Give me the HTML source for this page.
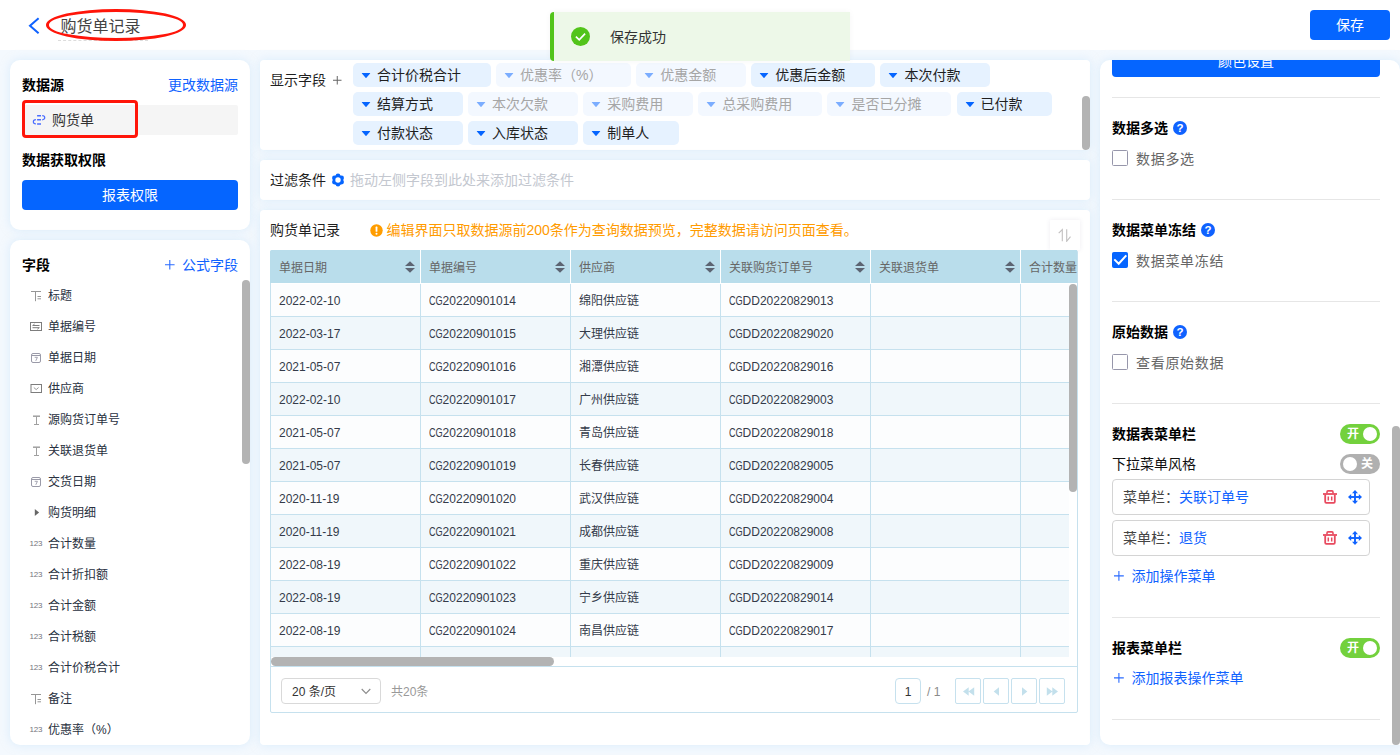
<!DOCTYPE html>
<html lang="zh-CN">
<head>
<meta charset="utf-8">
<title>购货单记录</title>
<style>
*{box-sizing:border-box;margin:0;padding:0}
html,body{width:1400px;height:755px;overflow:hidden}
body{font-family:"Liberation Sans","Noto Sans CJK SC",sans-serif;font-size:14px;color:#1f1f1f;background:#f4f9fe;position:relative}
.abs{position:absolute}
.hdr{position:absolute;left:0;top:0;width:1400px;height:50px;background:#fff}
.card{position:absolute;background:#fff;border-radius:10px;box-shadow:0 0 10px rgba(192,224,250,.5)}
.t{position:absolute;white-space:nowrap;line-height:20px;height:20px}
.b{font-weight:bold;color:#000}
.blue{color:#0f62ff}
.btn{position:absolute;background:#0565ff;color:#fff;border-radius:4px;text-align:center;font-size:14px}
.fld{position:absolute;left:48px;font-size:12px;line-height:20px;height:20px;white-space:nowrap;color:#283040}
.ico{position:absolute;overflow:visible}
.tag{position:absolute;height:24px;border-radius:5px;background:#e6f2ff;font-size:14px;line-height:25px;padding-left:24px;white-space:nowrap;color:#1f1f1f}
.tag svg{position:absolute;left:8px;top:9px}
.tag.dim{background:#f3f8ff;color:#a6a6a6}
.tag.dim svg{opacity:.5}
.sb{position:absolute;background:#b3b3b3;border-radius:4px}

.sortbtn{position:absolute;left:790px;top:10px;width:30px;height:30px;background:#fff;box-shadow:0 0 5px rgba(60,40,100,.09);border-radius:1px}
.sortbtn svg{position:absolute;left:8px;top:8px}
.tbl{position:absolute;left:10px;top:40px;width:808px;height:463px;border:1px solid #c6e1ee;border-radius:2px}
.thead{position:absolute;left:-1px;top:-1px;width:807px;height:33px;background:#b9ddeb;border-radius:2px 0 0 0;overflow:hidden}
.th{position:absolute;top:0;width:150px;height:33px;line-height:37px;padding-left:8px;margin-left:1px;font-size:12px;color:#666;border-right:1px solid #fff;white-space:nowrap}
.th .sort{position:absolute;right:5px;top:10.700px}
.tbody{position:absolute;left:0;top:33px;width:798px;height:373px;overflow:hidden;background:#fff}
.tr{position:absolute;left:0;width:900px;height:33px;background:#fcfdfe;border-bottom:1px solid #c6e1ee}
.tr.alt{background:#f0f7fb}
.td{position:absolute;top:0;left:0;width:150px;height:32px;line-height:35px;padding-left:8px;font-size:12px;color:#343b4a;border-right:1px solid #c6e1ee;white-space:nowrap}
.psel{position:absolute;left:10px;top:427px;width:100px;height:26px;border:1px solid #d9d9d9;border-radius:4px;font-size:12px;line-height:26px;padding-left:10px;color:#333}
.psel svg{position:absolute;left:79px;top:9px}
.pinp{position:absolute;left:624px;top:427px;width:26px;height:26px;border:1px solid #c6e1ee;border-radius:4px;font-size:12px;line-height:26px;text-align:center;color:#333}
.pbtn{position:absolute;top:427px;width:26px;height:26px;border:1px solid #c6e1ee;border-radius:2px}
.pbtn svg{position:absolute;left:5.500px;top:6.500px}

.hr{position:absolute;left:12px;width:268px;height:1px;background:#e6e6e6}
.cb{position:absolute;left:12px;width:16px;height:16px;border:1px solid #9797ab;border-radius:1.500px;background:#fff}
.cb.on{background:#0565ff;border-color:#0565ff}
.cb.on svg{position:absolute;left:-1px;top:-1px}
.cl{left:36px;color:#666;letter-spacing:.7px}
.sw{position:absolute;left:240px;width:40px;height:20px;border-radius:10px;color:#fff;font-size:12px;font-weight:bold;line-height:20px}
.sw.on{background:#73d13d}
.sw.off{background:#b0b0b0}
.sw i{position:absolute;top:3px;width:14px;height:14px;border-radius:7px;background:#fff}
.sw.on i{right:3px}.sw.off i{left:3px}
.sw span{position:absolute;top:0;line-height:21px}
.sw.on span{left:7px}.sw.off span{right:7px}
.mi{position:absolute;left:12px;width:258px;height:36px;border:1px solid #d4d4d4;border-radius:4px;line-height:34px;padding-left:10px;font-size:14px;white-space:nowrap}
.mi .k{color:#444}
.cg{display:inline-block;transform:scaleX(.76);transform-origin:0 50%;margin-right:-4.400px}
</style>
</head>
<body>
<!-- header -->
<div class="hdr">
  <svg class="ico" style="left:28px;top:17px" width="12" height="18" viewBox="0 0 12 18"><path d="M10.600 1.200 L2 8.700 L10.600 16.200" fill="none" stroke="#0f62ff" stroke-width="2" stroke-linecap="butt" stroke-linejoin="miter"/></svg>
  <div class="t" style="left:60.500px;top:15px;font-size:16px;line-height:24px;height:24px;color:#444">购货单记录</div>
  <div class="abs" style="left:58px;top:40px;width:90px;border-top:1px dashed #dcdcdc"></div>
  <div class="abs" style="left:46px;top:9px;width:140px;height:31.500px;border:3px solid #ff1509;border-radius:50%"></div>
  <div class="btn" style="left:1310px;top:10px;width:80px;height:30px;line-height:30px">保存</div>
</div>

<!-- LEFT-1 -->
<div class="card" style="left:10px;top:60px;width:240px;height:170px">
  <div class="t b" style="left:12px;top:15px">数据源</div>
  <div class="t blue" style="right:12px;top:15px">更改数据源</div>
  <div class="abs" style="left:12px;top:45px;width:216px;height:30px;background:#f5f5f5;border-radius:2px"></div>
  <svg class="ico" style="left:22px;top:54px" width="14" height="12" viewBox="0 0 14 12"><g fill="none" stroke="#4a6dff" stroke-width="1.500" stroke-linecap="butt"><path d="M5.100 1.700H9M5.100 5.700H9M5.100 9.900H9"/><path d="M10.200 1.700C13.600 1.700 13.600 5.800 10.200 5.800" stroke-width="1.200"/><path d="M3.900 5.700C0.500 5.700 0.500 9.900 3.900 9.900" stroke-width="1.200"/></g></svg>
  <div class="t" style="left:42px;top:50px;color:#333">购货单</div>
  <div class="abs" style="left:12px;top:40px;width:116px;height:38px;border:3px solid #ff1509;border-radius:4px"></div>
  <div class="t b" style="left:12px;top:90px">数据获取权限</div>
  <div class="btn" style="left:12px;top:120px;width:216px;height:30px;line-height:30px">报表权限</div>
</div>

<!-- LEFT-2 -->
<div class="card" id="fields" style="left:10px;top:240px;width:240px;height:505px;overflow:hidden">
  <div class="t b" style="left:12px;top:15px">字段</div>
  <svg class="ico" style="left:155.3px;top:19.7px" width="9.6" height="9.6" viewBox="0 0 9.6 9.6"><path d="M4.8 0V9.6M0 4.8H9.6" fill="none" stroke="#2a6bff" stroke-width="1.1"/></svg><div class="t blue" style="right:12px;top:15px">公式字段</div>
  <svg class="ico" style="left:20px;top:50px" width="12" height="12" viewBox="0 0 12 12"><g fill="none" stroke="#969696" stroke-width="1"><path d="M1 1.500h10M5.500 1.500v9.700M7.500 6.500h3.500M7.500 8.800h3.500"/></g></svg>
  <div class="fld" style="left:38px;top:46px">标题</div>
  <svg class="ico" style="left:20px;top:81px" width="12" height="12" viewBox="0 0 12 12"><g fill="none" stroke="#7d7d7d" stroke-width="1"><rect x="0.500" y="1.500" width="11" height="8"/><path d="M2.500 4.500h7M2.500 6.700h7M4.600 3L2.900 4.500M7.400 8.200L9.100 6.700"/></g></svg>
  <div class="fld" style="left:38px;top:77px">单据编号</div>
  <svg class="ico" style="left:20px;top:112px" width="12" height="12" viewBox="0 0 12 12"><g fill="none" stroke="#9a9aa8" stroke-width="1"><rect x="1.500" y="1.500" width="9" height="9" rx="1.500"/><path d="M1.500 3.500h9"/><path d="M4.700 5.300h2.700l-1.600 3.500" stroke-width="0.900"/></g></svg>
  <div class="fld" style="left:38px;top:108px">单据日期</div>
  <svg class="ico" style="left:20px;top:143px" width="12" height="12" viewBox="0 0 12 12"><g fill="none" stroke="#7d7d7d" stroke-width="1"><rect x="1" y="1.500" width="10.500" height="8"/><path d="M3.800 4.500L6.200 6.600L8.600 4.500" stroke="#9a9a9a"/></g></svg>
  <div class="fld" style="left:38px;top:139px">供应商</div>
  <svg class="ico" style="left:20px;top:174px" width="12" height="12" viewBox="0 0 12 12"><g fill="none" stroke="#a0a0a0"><path d="M3 2.200h7" stroke-width="1.500"/><path d="M6.500 2v8.300" stroke-width="1"/><path d="M4 10.500h5" stroke-width="1"/></g></svg>
  <div class="fld" style="left:38px;top:170px">源购货订单号</div>
  <svg class="ico" style="left:20px;top:205px" width="12" height="12" viewBox="0 0 12 12"><g fill="none" stroke="#a0a0a0"><path d="M3 2.200h7" stroke-width="1.500"/><path d="M6.500 2v8.300" stroke-width="1"/><path d="M4 10.500h5" stroke-width="1"/></g></svg>
  <div class="fld" style="left:38px;top:201px">关联退货单</div>
  <svg class="ico" style="left:20px;top:236px" width="12" height="12" viewBox="0 0 12 12"><g fill="none" stroke="#9a9aa8" stroke-width="1"><rect x="1.500" y="1.500" width="9" height="9" rx="1.500"/><path d="M1.500 3.500h9"/><path d="M4.700 5.300h2.700l-1.600 3.500" stroke-width="0.900"/></g></svg>
  <div class="fld" style="left:38px;top:232px">交货日期</div>
  <svg class="ico" style="left:20px;top:267px" width="12" height="12" viewBox="0 0 12 12"><path d="M4.800 1.900L9.100 5.500L4.800 9z" fill="#666"/></svg>
  <div class="fld" style="left:38px;top:263px">购货明细</div>
  <span class="abs" style="left:19.500px;top:297.5px;font-size:8px;line-height:12px;color:#74747c;letter-spacing:-.2px">123</span>
  <div class="fld" style="left:38px;top:294px">合计数量</div>
  <span class="abs" style="left:19.500px;top:328.5px;font-size:8px;line-height:12px;color:#74747c;letter-spacing:-.2px">123</span>
  <div class="fld" style="left:38px;top:325px">合计折扣额</div>
  <span class="abs" style="left:19.500px;top:359.5px;font-size:8px;line-height:12px;color:#74747c;letter-spacing:-.2px">123</span>
  <div class="fld" style="left:38px;top:356px">合计金额</div>
  <span class="abs" style="left:19.500px;top:390.5px;font-size:8px;line-height:12px;color:#74747c;letter-spacing:-.2px">123</span>
  <div class="fld" style="left:38px;top:387px">合计税额</div>
  <span class="abs" style="left:19.500px;top:421.5px;font-size:8px;line-height:12px;color:#74747c;letter-spacing:-.2px">123</span>
  <div class="fld" style="left:38px;top:418px">合计价税合计</div>
  <svg class="ico" style="left:20px;top:453px" width="12" height="12" viewBox="0 0 12 12"><g fill="none" stroke="#969696" stroke-width="1"><path d="M1 1.500h10M5.500 1.500v9.700M7.500 6.500h3.500M7.500 8.800h3.500"/></g></svg>
  <div class="fld" style="left:38px;top:449px">备注</div>
  <span class="abs" style="left:19.500px;top:483.5px;font-size:8px;line-height:12px;color:#74747c;letter-spacing:-.2px">123</span>
  <div class="fld" style="left:38px;top:480px">优惠率（%）</div>
  <div class="sb" style="left:232px;top:40px;width:8px;height:184px"></div>
</div>

<!-- MID-1 display fields -->
<div class="card" style="left:260px;top:60px;width:830px;height:90px;overflow:hidden;border-radius:4px" id="m1">
  <div class="t" style="left:10px;top:10px">显示字段</div>
  <svg class="ico" style="left:72.65px;top:16.25px" width="8.5" height="8.5" viewBox="0 0 8.5 8.5"><path d="M4.25 0V8.5M0 4.25H8.5" fill="none" stroke="#666" stroke-width="1"/></svg>
  <div class="tag" style="left:93px;top:3px;width:137.5px"><svg width="10" height="7" viewBox="0 0 10 7"><path d="M1.200 0.900h7.600a.4.400 0 0 1 .3.700L5.400 5.700a.5.500 0 0 1-.8 0L0.900 1.600a.4.400 0 0 1 .3-.7z" fill="#0565ff"/></svg>合计价税合计</div>
  <div class="tag dim" style="left:236.1px;top:3px;width:134.5px"><svg width="10" height="7" viewBox="0 0 10 7"><path d="M1.200 0.900h7.600a.4.400 0 0 1 .3.700L5.400 5.700a.5.500 0 0 1-.8 0L0.900 1.600a.4.400 0 0 1 .3-.7z" fill="#0565ff"/></svg>优惠率（%）</div>
  <div class="tag dim" style="left:376.2px;top:3px;width:109.5px"><svg width="10" height="7" viewBox="0 0 10 7"><path d="M1.200 0.900h7.600a.4.400 0 0 1 .3.700L5.400 5.700a.5.500 0 0 1-.8 0L0.900 1.600a.4.400 0 0 1 .3-.7z" fill="#0565ff"/></svg>优惠金额</div>
  <div class="tag" style="left:491.3px;top:3px;width:123.5px"><svg width="10" height="7" viewBox="0 0 10 7"><path d="M1.200 0.900h7.600a.4.400 0 0 1 .3.700L5.400 5.700a.5.500 0 0 1-.8 0L0.900 1.600a.4.400 0 0 1 .3-.7z" fill="#0565ff"/></svg>优惠后金额</div>
  <div class="tag" style="left:620.4px;top:3px;width:109.5px"><svg width="10" height="7" viewBox="0 0 10 7"><path d="M1.200 0.900h7.600a.4.400 0 0 1 .3.700L5.400 5.700a.5.500 0 0 1-.8 0L0.900 1.600a.4.400 0 0 1 .3-.7z" fill="#0565ff"/></svg>本次付款</div>
  <div class="tag" style="left:93px;top:32px;width:109.5px"><svg width="10" height="7" viewBox="0 0 10 7"><path d="M1.200 0.900h7.600a.4.400 0 0 1 .3.700L5.400 5.700a.5.500 0 0 1-.8 0L0.900 1.600a.4.400 0 0 1 .3-.7z" fill="#0565ff"/></svg>结算方式</div>
  <div class="tag dim" style="left:208.1px;top:32px;width:109.5px"><svg width="10" height="7" viewBox="0 0 10 7"><path d="M1.200 0.900h7.600a.4.400 0 0 1 .3.700L5.400 5.700a.5.500 0 0 1-.8 0L0.900 1.600a.4.400 0 0 1 .3-.7z" fill="#0565ff"/></svg>本次欠款</div>
  <div class="tag dim" style="left:323.2px;top:32px;width:109.5px"><svg width="10" height="7" viewBox="0 0 10 7"><path d="M1.200 0.900h7.600a.4.400 0 0 1 .3.700L5.400 5.700a.5.500 0 0 1-.8 0L0.900 1.600a.4.400 0 0 1 .3-.7z" fill="#0565ff"/></svg>采购费用</div>
  <div class="tag dim" style="left:438.3px;top:32px;width:123.5px"><svg width="10" height="7" viewBox="0 0 10 7"><path d="M1.200 0.900h7.600a.4.400 0 0 1 .3.700L5.400 5.700a.5.500 0 0 1-.8 0L0.900 1.600a.4.400 0 0 1 .3-.7z" fill="#0565ff"/></svg>总采购费用</div>
  <div class="tag dim" style="left:567.4px;top:32px;width:123.5px"><svg width="10" height="7" viewBox="0 0 10 7"><path d="M1.200 0.900h7.600a.4.400 0 0 1 .3.700L5.400 5.700a.5.500 0 0 1-.8 0L0.900 1.600a.4.400 0 0 1 .3-.7z" fill="#0565ff"/></svg>是否已分摊</div>
  <div class="tag" style="left:696.5px;top:32px;width:95.5px"><svg width="10" height="7" viewBox="0 0 10 7"><path d="M1.200 0.900h7.600a.4.400 0 0 1 .3.700L5.400 5.700a.5.500 0 0 1-.8 0L0.900 1.600a.4.400 0 0 1 .3-.7z" fill="#0565ff"/></svg>已付款</div>
  <div class="tag" style="left:93px;top:61px;width:109.5px"><svg width="10" height="7" viewBox="0 0 10 7"><path d="M1.200 0.900h7.600a.4.400 0 0 1 .3.700L5.400 5.700a.5.500 0 0 1-.8 0L0.900 1.600a.4.400 0 0 1 .3-.7z" fill="#0565ff"/></svg>付款状态</div>
  <div class="tag" style="left:208.1px;top:61px;width:109.5px"><svg width="10" height="7" viewBox="0 0 10 7"><path d="M1.200 0.900h7.600a.4.400 0 0 1 .3.700L5.400 5.700a.5.500 0 0 1-.8 0L0.900 1.600a.4.400 0 0 1 .3-.7z" fill="#0565ff"/></svg>入库状态</div>
  <div class="tag" style="left:323.2px;top:61px;width:95.5px"><svg width="10" height="7" viewBox="0 0 10 7"><path d="M1.200 0.900h7.600a.4.400 0 0 1 .3.700L5.400 5.700a.5.500 0 0 1-.8 0L0.900 1.600a.4.400 0 0 1 .3-.7z" fill="#0565ff"/></svg>制单人</div>
  <div class="sb" style="left:822px;top:36px;width:8px;height:54px"></div>
</div>
<!-- MID-2 filter -->
<div class="card" style="left:260px;top:160px;width:830px;height:40px;border-radius:4px">
  <div class="t" style="left:10px;top:10px">过滤条件</div>
  <svg class="ico" style="left:70.500px;top:13px" width="14" height="14" viewBox="0 0 14 14"><g fill="#0565ff"><circle cx="7" cy="7" r="5.200"/><circle cx="10.64" cy="9.10" r="2.300"/><circle cx="7.00" cy="11.20" r="2.300"/><circle cx="3.36" cy="9.10" r="2.300"/><circle cx="3.36" cy="4.90" r="2.300"/><circle cx="7.00" cy="2.80" r="2.300"/><circle cx="10.64" cy="4.90" r="2.300"/></g><circle cx="7" cy="7" r="2.700" fill="#fff"/></svg>
  <div class="t" style="left:90px;top:10px;color:#c3c7cf">拖动左侧字段到此处来添加过滤条件</div>
</div>
<!-- MID-3 table -->
<div class="card" style="left:260px;top:210px;width:830px;height:535px;border-radius:4px" id="m3">
  <div class="t" style="left:10px;top:10px">购货单记录</div>
  <svg class="ico" style="left:110px;top:14px" width="13" height="13" viewBox="0 0 13 13"><circle cx="6.500" cy="6.500" r="6.200" fill="#ff9d00"/><rect x="5.600" y="2.600" width="1.800" height="5.200" rx=".6" fill="#fff"/><circle cx="6.500" cy="9.800" r="1" fill="#fff"/></svg>
  <div class="t" style="left:126.500px;top:10px;color:#ff9b00">编辑界面只取数据源前200条作为查询数据预览，完整数据请访问页面查看。</div>
  <div class="sortbtn"><svg width="14" height="14" viewBox="0 0 14 14"><g fill="none" stroke="#c2c0c0" stroke-width="1.100"><path d="M0.700 5.100L4.300 1.500V13.300"/><path d="M8.700 1.300V13.300L12.500 8.700"/></g></svg></div>
  <div class="tbl">
    <div class="thead">
      <div class="th" style="left:0px">单据日期<svg class="sort" width="10" height="12" viewBox="0 0 10 12"><path d="M5 0.200L10 5H0z M5 11.800L0 7H10z" fill="#5c6472"/></svg></div>
      <div class="th" style="left:150px">单据编号<svg class="sort" width="10" height="12" viewBox="0 0 10 12"><path d="M5 0.200L10 5H0z M5 11.800L0 7H10z" fill="#5c6472"/></svg></div>
      <div class="th" style="left:300px">供应商<svg class="sort" width="10" height="12" viewBox="0 0 10 12"><path d="M5 0.200L10 5H0z M5 11.800L0 7H10z" fill="#5c6472"/></svg></div>
      <div class="th" style="left:450px">关联购货订单号<svg class="sort" width="10" height="12" viewBox="0 0 10 12"><path d="M5 0.200L10 5H0z M5 11.800L0 7H10z" fill="#5c6472"/></svg></div>
      <div class="th" style="left:600px">关联退货单<svg class="sort" width="10" height="12" viewBox="0 0 10 12"><path d="M5 0.200L10 5H0z M5 11.800L0 7H10z" fill="#5c6472"/></svg></div>
      <div class="th" style="left:750px">合计数量</div>
    </div>
    <div class="tbody">
      <div class="tr" style="top:0px"><div class="td" style="left:0px">2022-02-10</div><div class="td" style="left:150px"><span class="cg">CG</span>20220901014</div><div class="td" style="left:300px">绵阳供应链</div><div class="td" style="left:450px"><span class="cg">CG</span>DD20220829013</div><div class="td" style="left:600px"></div><div class="td" style="left:750px"></div></div>
      <div class="tr alt" style="top:33px"><div class="td" style="left:0px">2022-03-17</div><div class="td" style="left:150px"><span class="cg">CG</span>20220901015</div><div class="td" style="left:300px">大理供应链</div><div class="td" style="left:450px"><span class="cg">CG</span>DD20220829020</div><div class="td" style="left:600px"></div><div class="td" style="left:750px"></div></div>
      <div class="tr" style="top:66px"><div class="td" style="left:0px">2021-05-07</div><div class="td" style="left:150px"><span class="cg">CG</span>20220901016</div><div class="td" style="left:300px">湘潭供应链</div><div class="td" style="left:450px"><span class="cg">CG</span>DD20220829016</div><div class="td" style="left:600px"></div><div class="td" style="left:750px"></div></div>
      <div class="tr alt" style="top:99px"><div class="td" style="left:0px">2022-02-10</div><div class="td" style="left:150px"><span class="cg">CG</span>20220901017</div><div class="td" style="left:300px">广州供应链</div><div class="td" style="left:450px"><span class="cg">CG</span>DD20220829003</div><div class="td" style="left:600px"></div><div class="td" style="left:750px"></div></div>
      <div class="tr" style="top:132px"><div class="td" style="left:0px">2021-05-07</div><div class="td" style="left:150px"><span class="cg">CG</span>20220901018</div><div class="td" style="left:300px">青岛供应链</div><div class="td" style="left:450px"><span class="cg">CG</span>DD20220829018</div><div class="td" style="left:600px"></div><div class="td" style="left:750px"></div></div>
      <div class="tr alt" style="top:165px"><div class="td" style="left:0px">2021-05-07</div><div class="td" style="left:150px"><span class="cg">CG</span>20220901019</div><div class="td" style="left:300px">长春供应链</div><div class="td" style="left:450px"><span class="cg">CG</span>DD20220829005</div><div class="td" style="left:600px"></div><div class="td" style="left:750px"></div></div>
      <div class="tr" style="top:198px"><div class="td" style="left:0px">2020-11-19</div><div class="td" style="left:150px"><span class="cg">CG</span>20220901020</div><div class="td" style="left:300px">武汉供应链</div><div class="td" style="left:450px"><span class="cg">CG</span>DD20220829004</div><div class="td" style="left:600px"></div><div class="td" style="left:750px"></div></div>
      <div class="tr alt" style="top:231px"><div class="td" style="left:0px">2020-11-19</div><div class="td" style="left:150px"><span class="cg">CG</span>20220901021</div><div class="td" style="left:300px">成都供应链</div><div class="td" style="left:450px"><span class="cg">CG</span>DD20220829008</div><div class="td" style="left:600px"></div><div class="td" style="left:750px"></div></div>
      <div class="tr" style="top:264px"><div class="td" style="left:0px">2022-08-19</div><div class="td" style="left:150px"><span class="cg">CG</span>20220901022</div><div class="td" style="left:300px">重庆供应链</div><div class="td" style="left:450px"><span class="cg">CG</span>DD20220829009</div><div class="td" style="left:600px"></div><div class="td" style="left:750px"></div></div>
      <div class="tr alt" style="top:297px"><div class="td" style="left:0px">2022-08-19</div><div class="td" style="left:150px"><span class="cg">CG</span>20220901023</div><div class="td" style="left:300px">宁乡供应链</div><div class="td" style="left:450px"><span class="cg">CG</span>DD20220829014</div><div class="td" style="left:600px"></div><div class="td" style="left:750px"></div></div>
      <div class="tr" style="top:330px"><div class="td" style="left:0px">2022-08-19</div><div class="td" style="left:150px"><span class="cg">CG</span>20220901024</div><div class="td" style="left:300px">南昌供应链</div><div class="td" style="left:450px"><span class="cg">CG</span>DD20220829017</div><div class="td" style="left:600px"></div><div class="td" style="left:750px"></div></div>
      <div class="tr alt" style="top:363px"><div class="td" style="left:0px"></div><div class="td" style="left:150px"></div><div class="td" style="left:300px"></div><div class="td" style="left:450px"></div><div class="td" style="left:600px"></div><div class="td" style="left:750px"></div></div>
    </div>
    <div class="sb" style="left:798px;top:33px;width:8px;height:208px"></div>
    <div class="sb" style="left:0px;top:406px;width:283px;height:9px;border-radius:4.500px"></div>
    <div class="abs" style="left:0;top:415px;width:806px;height:1px;background:#c6e1ee"></div>
    <div class="psel"><span>20 条/页</span><svg width="10" height="7" viewBox="0 0 10 7"><path d="M0.700 1L5 5.500L9.300 1" fill="none" stroke="#8c8c8c" stroke-width="1.100"/></svg></div>
    <div class="t" style="left:120px;top:431px;font-size:12px;color:#999">共20条</div>
    <div class="pinp">1</div>
    <div class="t" style="left:656px;top:431px;font-size:12px;color:#8a8a8a">/ 1</div>
    <div class="pbtn" style="left:684px"><svg width="13" height="11" viewBox="0 0 13 11" fill="#c3e0ec"><path d="M6.700 1.300L1 5.500L6.700 9.700z M12.200 1.300L6.500 5.500L12.200 9.700z"/></svg></div>
    <div class="pbtn" style="left:712px"><svg width="13" height="11" viewBox="0 0 13 11" fill="#c3e0ec"><path d="M9 1.300L3.700 5.500L9 9.700z"/></svg></div>
    <div class="pbtn" style="left:740px"><svg width="13" height="11" viewBox="0 0 13 11" fill="#c3e0ec"><path d="M4 1.300L9.300 5.500L4 9.700z"/></svg></div>
    <div class="pbtn" style="left:768px"><svg width="13" height="11" viewBox="0 0 13 11" fill="#c3e0ec"><path d="M0.800 1.300L6.500 5.500L0.800 9.700z M6.300 1.300L12 5.500L6.300 9.700z"/></svg></div>
  </div>
</div>

<!-- RIGHT -->
<div class="card" id="rp" style="left:1100px;top:60px;width:300px;height:685px;overflow:hidden;border-radius:10px 10px 0 10px">
  <div class="btn" style="left:12px;top:-14px;width:268px;height:31px;line-height:31px">颜色设置</div>
  <div class="hr" style="top:37px"></div>
  <div class="hr" style="top:139px"></div>
  <div class="hr" style="top:241px"></div>
  <div class="hr" style="top:343px"></div>
  <div class="hr" style="top:557px"></div>
  <div class="hr" style="top:659px"></div>
  <div class="t b" style="left:12px;top:58px">数据多选</div><svg class="ico" style="left:73px;top:61px" width="14" height="14" viewBox="0 0 14 14"><circle cx="7" cy="7" r="7" fill="#0f62ff"/><text x="7" y="11.100" text-anchor="middle" font-family="Liberation Sans,sans-serif" font-size="11.500" font-weight="bold" fill="#fff">?</text></svg>
  <div class="cb" style="top:90px"></div><div class="t cl" style="top:89px">数据多选</div>
  <div class="t b" style="left:12px;top:160px">数据菜单冻结</div><svg class="ico" style="left:101px;top:163px" width="14" height="14" viewBox="0 0 14 14"><circle cx="7" cy="7" r="7" fill="#0f62ff"/><text x="7" y="11.100" text-anchor="middle" font-family="Liberation Sans,sans-serif" font-size="11.500" font-weight="bold" fill="#fff">?</text></svg>
  <div class="cb on" style="top:192px"><svg width="16" height="16" viewBox="0 0 16 16"><path d="M2.300 7.400L6.700 11.700L14.300 3.300" fill="none" stroke="#fff" stroke-width="2"/></svg></div><div class="t cl" style="top:191px">数据菜单冻结</div>
  <div class="t b" style="left:12px;top:262px">原始数据</div><svg class="ico" style="left:73px;top:265px" width="14" height="14" viewBox="0 0 14 14"><circle cx="7" cy="7" r="7" fill="#0f62ff"/><text x="7" y="11.100" text-anchor="middle" font-family="Liberation Sans,sans-serif" font-size="11.500" font-weight="bold" fill="#fff">?</text></svg>
  <div class="cb" style="top:294px"></div><div class="t cl" style="top:293px">查看原始数据</div>
  <div class="t b" style="left:12px;top:364px">数据表菜单栏</div><div class="sw on" style="top:364px"><span>开</span><i></i></div>
  <div class="t" style="left:12px;top:394px;color:#111">下拉菜单风格</div><div class="sw off" style="top:394px"><i></i><span>关</span></div>
  <div class="mi" style="top:419px"><span class="k">菜单栏：</span><span class="blue">关联订单号</span><svg class="ico" style="left:210px;top:10px" width="14" height="14" viewBox="0 0 14 14"><g fill="none" stroke="#e84a5f"><path d="M0 4h14" stroke-width="1.800"/><path d="M4 3.600V1.900a1 1 0 0 1 1-1h4a1 1 0 0 1 1 1v1.700" stroke-width="1.600"/><path d="M2.200 4.500v7.300a1.100 1.100 0 0 0 1.100 1.100h7.400a1.100 1.100 0 0 0 1.100-1.100V4.500" stroke-width="1.800"/><path d="M5.300 6.400v4.200M8.700 6.400v4.200" stroke-width="1.500"/></g></svg><svg class="ico" style="left:235.300px;top:9.600px" width="14" height="14" viewBox="0 0 14 14"><g fill="#0f62ff"><rect x="6.050" y="2" width="1.900" height="10"/><rect x="2" y="6.050" width="10" height="1.900"/><path d="M7 0L10 3.200H4z"/><path d="M7 14L4 10.800h6z"/><path d="M0 7L3.200 4v6z"/><path d="M14 7L10.800 10V4z"/></g></svg></div>
  <div class="mi" style="top:460px"><span class="k">菜单栏：</span><span class="blue">退货</span><svg class="ico" style="left:210px;top:10px" width="14" height="14" viewBox="0 0 14 14"><g fill="none" stroke="#e84a5f"><path d="M0 4h14" stroke-width="1.800"/><path d="M4 3.600V1.900a1 1 0 0 1 1-1h4a1 1 0 0 1 1 1v1.700" stroke-width="1.600"/><path d="M2.200 4.500v7.300a1.100 1.100 0 0 0 1.100 1.100h7.400a1.100 1.100 0 0 0 1.100-1.100V4.500" stroke-width="1.800"/><path d="M5.300 6.400v4.200M8.700 6.400v4.200" stroke-width="1.500"/></g></svg><svg class="ico" style="left:235.300px;top:9.600px" width="14" height="14" viewBox="0 0 14 14"><g fill="#0f62ff"><rect x="6.050" y="2" width="1.900" height="10"/><rect x="2" y="6.050" width="10" height="1.900"/><path d="M7 0L10 3.200H4z"/><path d="M7 14L4 10.800h6z"/><path d="M0 7L3.200 4v6z"/><path d="M14 7L10.800 10V4z"/></g></svg></div>
  <svg class="ico" style="left:13.95px;top:510.6px" width="9.8" height="9.8" viewBox="0 0 9.8 9.8"><path d="M4.9 0V9.8M0 4.9H9.8" fill="none" stroke="#2a6bff" stroke-width="1.1"/></svg><div class="t blue" style="left:31.500px;top:506px">添加操作菜单</div>
  <div class="t b" style="left:12px;top:578px">报表菜单栏</div><div class="sw on" style="top:578px"><span>开</span><i></i></div>
  <svg class="ico" style="left:13.95px;top:612.6px" width="9.8" height="9.8" viewBox="0 0 9.8 9.8"><path d="M4.9 0V9.8M0 4.9H9.8" fill="none" stroke="#2a6bff" stroke-width="1.1"/></svg><div class="t blue" style="left:31.500px;top:608px">添加报表操作菜单</div>
  <div class="sb" style="left:292px;top:366px;width:8px;height:319px;border-radius:4px"></div>
</div>
<!-- TOAST -->
<div class="abs" style="left:550px;top:12px;width:300px;height:49px;background:#edf8e8;border-left:4px solid #52c41a;border-radius:4px 0 0 4px;box-shadow:0 0 6px rgba(0,0,0,.04)">
  <svg class="ico" style="left:16.500px;top:15px" width="19" height="19" viewBox="0 0 19 19"><circle cx="9.500" cy="9.500" r="9.500" fill="#52c41a"/><path d="M4.900 9.700L8.200 12.800L14.100 6.700" fill="none" stroke="#fff" stroke-width="1.700"/></svg>
  <div class="t" style="left:56px;top:15px;color:#333">保存成功</div>
</div>
</body>
</html>
